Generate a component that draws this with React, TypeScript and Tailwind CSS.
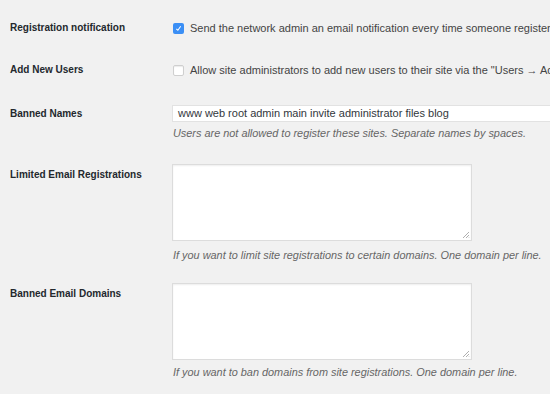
import React from "react";

const font = { fontFamily: '"Liberation Sans", Arial, sans-serif' };

function Label({ children, className = "" }: { children: React.ReactNode; className?: string }) {
  return (
    <div className={`w-[172px] shrink-0 pl-[10px] text-[10px] leading-[14px] font-bold text-[#23282d] ${className}`}>
      {children}
    </div>
  );
}

function Help({ children, className = "" }: { children: React.ReactNode; className?: string }) {
  return (
    <p className={`pl-px text-[10.9px] leading-[14px] italic text-[#666] whitespace-nowrap ${className}`}>{children}</p>
  );
}

function Textarea() {
  return (
    <div className="relative w-[300px] h-[77px] bg-white border border-[#dcdcdc] shadow-[inset_0_1px_2px_rgba(0,0,0,0.07)]">
      {/* resize grip */}
      <svg className="absolute right-[1px] bottom-[1px]" width="8" height="8" viewBox="0 0 8 8">
        <path d="M7 1 L1 7 M7 4 L4 7 M7 6.5 L6.5 7" stroke="#9a9a9a" strokeWidth="0.8" />
      </svg>
    </div>
  );
}

export default function App() {
  return (
    <div className="w-[550px] h-[394px] overflow-hidden bg-[#f1f1f1]" style={font}>
      {/* Registration notification */}
      <div className="flex pt-[21px]">
        <Label>Registration notification</Label>
        <div className="flex items-center whitespace-nowrap text-[11px] leading-[14px] text-[#444]">
          <span className="ml-[1px] mr-[6px] flex h-[11px] w-[11px] shrink-0 items-center justify-center rounded-[2px] bg-[#3b8ff5]">
            <svg width="7" height="7" viewBox="0 0 8 8">
              <path d="M1.5 4.3 L3.3 6 L6.5 1.5" fill="none" stroke="white" strokeWidth="1.2" />
            </svg>
          </span>
          Send the network admin an email notification every time someone registers
        </div>
      </div>

      {/* Add New Users */}
      <div className="flex mt-[28px]">
        <Label>Add New Users</Label>
        <div className="flex items-center whitespace-nowrap text-[11px] leading-[14px] text-[#444]">
          <span className="ml-[1px] mr-[6px] h-[11px] w-[11px] shrink-0 rounded-[2px] border border-[#cfcfcf] bg-white shadow-[inset_0_1px_1px_rgba(0,0,0,0.08)]" />
          Allow site administrators to add new users to their site via the "Users → Ad
        </div>
      </div>

      {/* Banned Names */}
      <div className="flex mt-[28px]">
        <Label className="pt-[2px]">Banned Names</Label>
        <div className="flex flex-col">
          <div className="w-[420px] h-[17px] bg-white border border-[#e2e2e2] pl-[5px] text-[11px] leading-[15px] text-[#32373c] whitespace-nowrap">
            www web root admin main invite administrator files blog
          </div>
          <Help className="mt-[4px]">Users are not allowed to register these sites. Separate names by spaces.</Help>
        </div>
      </div>

      {/* Limited Email Registrations */}
      <div className="flex mt-[24px]">
        <Label className="pt-[4px]">Limited Email Registrations</Label>
        <div className="flex flex-col">
          <Textarea />
          <Help className="mt-[7px]">If you want to limit site registrations to certain domains. One domain per line.</Help>
        </div>
      </div>

      {/* Banned Email Domains */}
      <div className="flex mt-[21px]">
        <Label className="pt-[4px]">Banned Email Domains</Label>
        <div className="flex flex-col">
          <Textarea />
          <Help className="mt-[5px]">If you want to ban domains from site registrations. One domain per line.</Help>
        </div>
      </div>
    </div>
  );
}
